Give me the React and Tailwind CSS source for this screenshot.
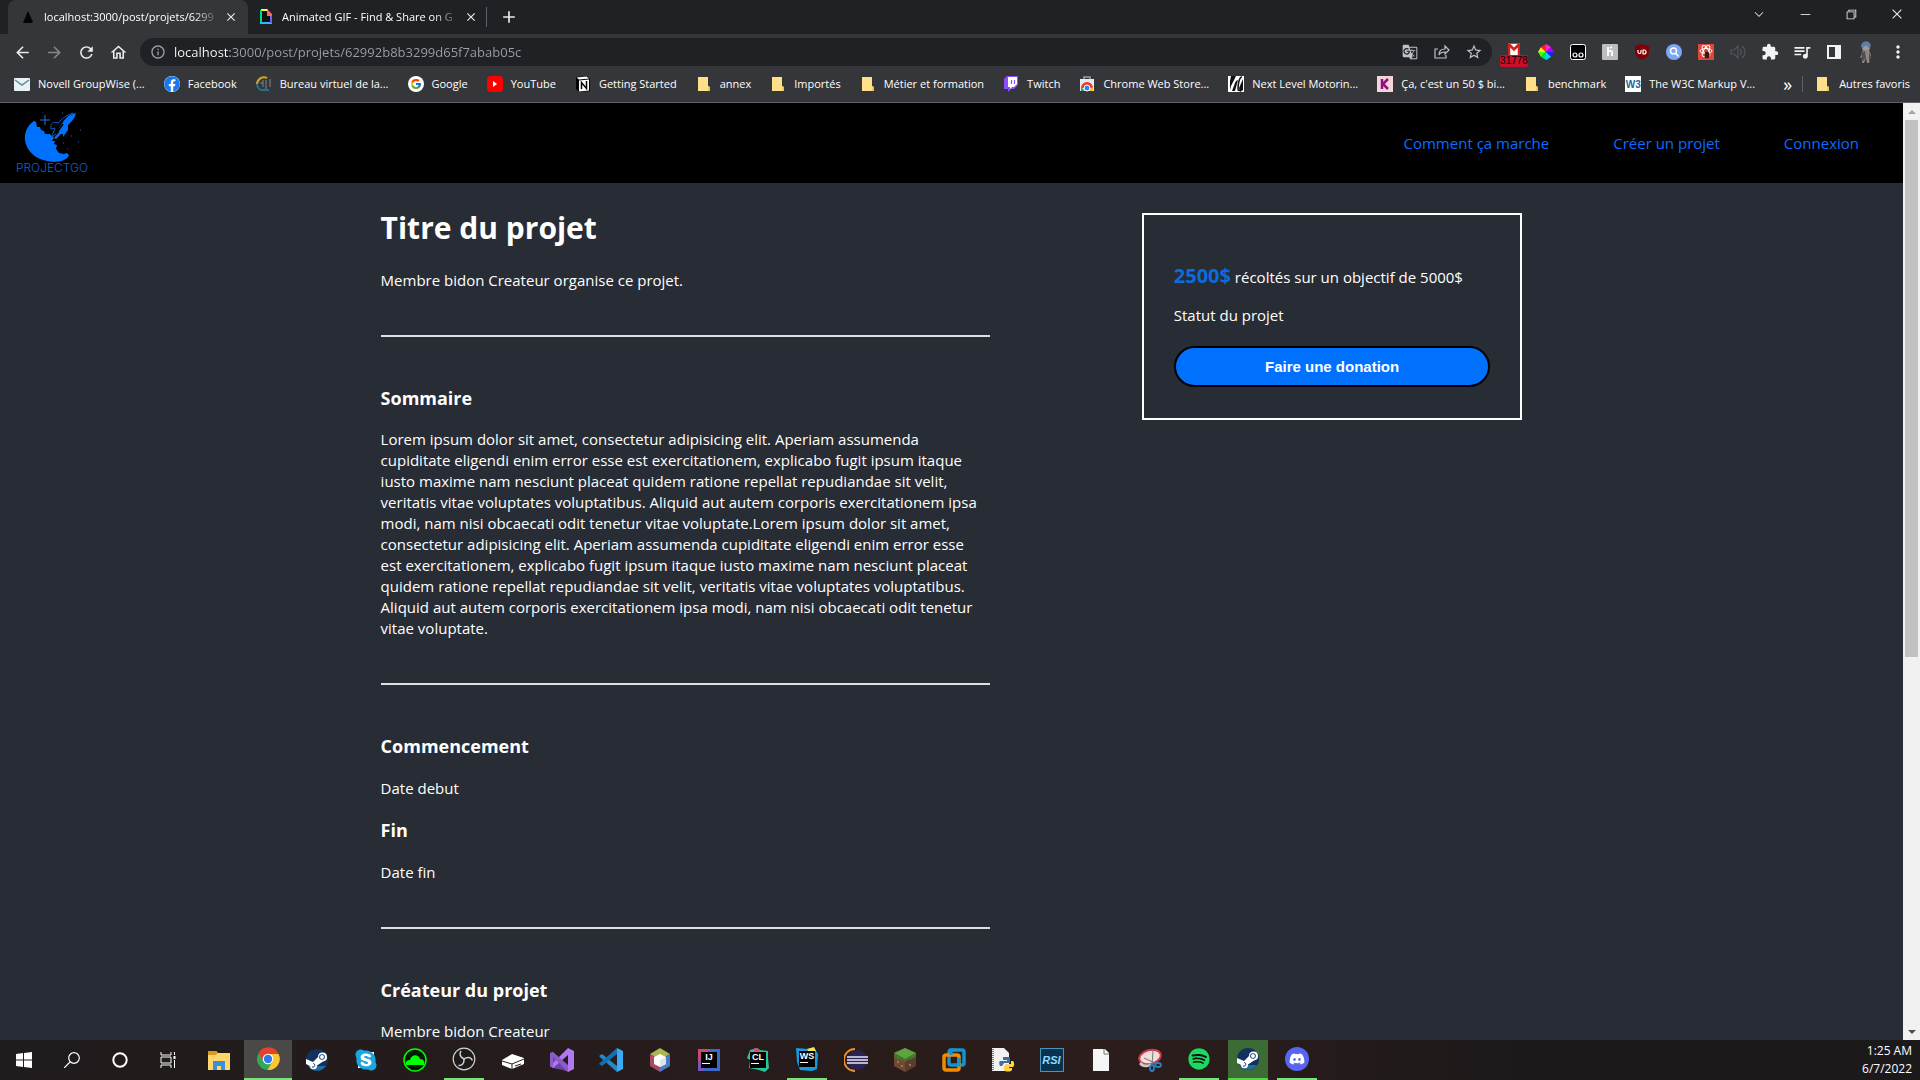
import React from "react";
import { FaFacebook, FaYoutube, FaTwitch, FaSteam, FaSkype, FaDiscord, FaSpotify } from "react-icons/fa";
import { FcGoogle } from "react-icons/fc";
import {
  MdArrowBack, MdArrowForward, MdRefresh, MdOutlineHome, MdInfoOutline, MdGTranslate,
  MdStarBorder, MdQueueMusic, MdMoreVert, MdAdd, MdClose, MdExtension,
} from "react-icons/md";
import { VscChromeClose, VscChromeMinimize, VscChromeRestore, VscChevronDown } from "react-icons/vsc";

const Svg = ({ box = 24, className = "size-6", children }) => (
  <svg viewBox={`0 0 ${box} ${box}`} className={className} fill="none" aria-hidden="true">{children}</svg>
);

/* ---------- bookmark icons ---------- */
const Folder = () => (
  <Svg box={16} className="size-4"><path d="M2 1h10v9l2 1v4H2z" fill="#ffe08a" /><path d="M12 10l2 1v4h-2z" fill="#f0c65a" /></Svg>
);
const Mail = () => (
  <Svg box={16} className="size-4"><rect y="2" width="16" height="13" rx="1" fill="#e8f1f4" /><path d="M1 4l7 5 7-5" stroke="#5d8ba0" strokeWidth="1.500" /></Svg>
);
const Bureau = () => (
  <Svg box={16} className="size-4">
    <path d="M1 8a7 7 0 0 1 10-6" stroke="#d9a520" strokeWidth="2" />
    <path d="M1 8a6 6 0 0 0 7 6h5" stroke="#2b6d8f" strokeWidth="2" />
    <path d="M7 4v7M10 4v9M14 3v8M4 7h3" stroke="#7d8790" />
  </Svg>
);
const Notion = () => (
  <Svg box={16} className="size-4"><path d="M1 1l11-1 3 3v12l-11 1-3-3z" fill="#000" /><path d="M1.500 1.500l10-1 2.500 2-10 1z" fill="#fff" /><path d="M4 4.500l10-1v11l-10 1z" fill="#fff" /><path d="M6.500 13V6.500l5 6V5" stroke="#000" strokeWidth="1.500" /></Svg>
);
const WebStore = () => (
  <Svg box={16} className="size-4">
    <path d="M5 4V1h6v3" stroke="#9aa0a6" strokeWidth="1.500" /><path d="M1 3h14v12H1z" fill="#e8eaed" />
    <path d="M2 12a6 6 0 0 1 12 0H8z" fill="#e33b2e" /><path d="M2 11l4 4H2z" fill="#2ea44f" /><path d="M14 11v4H8z" fill="#fbc02d" /><circle cx="8" cy="12" r="3" fill="#3f7ff0" stroke="#fff" />
  </Svg>
);
const NextLevel = () => (
  <Svg box={16} className="size-4"><path d="M0 0h16v16H0z" fill="#fff" /><path d="M3 0h5L3 10l-1 4V5zM8 5l2-1-3 11H4l3-8zM15 3v11l-3 2-1-4z" fill="#111" /><path d="M14 1c-3 0-4 8-4 12 0 2 2 2 3 0" stroke="#111" strokeWidth="1.500" /></Svg>
);
const KIcon = () => (
  <Svg box={16} className="size-4"><path d="M0 0h16v16H0z" fill="#f7d3dc" /><path d="M5 3v10M11 3L6 8l5 5" stroke="#8b1380" strokeWidth="2.500" /></Svg>
);
const W3 = () => (
  <span className="flex size-4 items-center justify-center bg-white font-['Liberation_Sans'] text-[10px] font-bold text-[#1f6098]">W3</span>
);

const bookmarks = [
  [Mail, "Novell GroupWise (..."],
  [() => <span className="flex size-4 rounded-full bg-white"><FaFacebook className="size-4 text-[#1877f2]" /></span>, "Facebook"],
  [Bureau, "Bureau virtuel de la..."],
  [() => <span className="flex size-4 items-center justify-center rounded-full bg-white"><FcGoogle className="size-3" /></span>, "Google"],
  [() => <span className="flex size-4 items-center justify-center rounded-sm bg-[#f00]"><Svg box={8} className="size-2"><path d="M2 1l4 3-4 3z" fill="#fff" /></Svg></span>, "YouTube"],
  [Notion, "Getting Started"],
  [Folder, "annex"],
  [Folder, "Importés"],
  [Folder, "Métier et formation"],
  [() => (
    <Svg box={16} className="size-4"><path d="M4 0h11v9l-4 4H8l-3 3v-3H1V3z" fill="#8d4cff" /><path d="M5 1h9v7l-3 3H9l-2 2v-2H5z" fill="#fff" /><path d="M8.500 4v4M11.500 4v4" stroke="#8d4cff" strokeWidth="1.200" /></Svg>
  ), "Twitch"],
  [WebStore, "Chrome Web Store..."],
  [NextLevel, "Next Level Motorin..."],
  [KIcon, "Ça, c'est un 50 $ bi..."],
  [Folder, "benchmark"],
  [W3, "The W3C Markup V..."],
];

/* ---------- browser extension icons ---------- */
const ShareIcon = () => (
  <Svg box={16} className="size-4"><path d="M4 5H1v9h11v-3M5 11c0-4 2-6 6-6V2l4 4-4 4V8c-3 0-5 1-6 3z" stroke="#bdc1c6" strokeWidth="1.200" /></Svg>
);
const Wheel = () => (
  <Svg box={16} className="size-4">
    <path d="M8 8V0l5 3z" fill="#ff2ad4" /><path d="M8 8l5-5 3 5z" fill="#b100ff" /><path d="M8 8h8l-3 5z" fill="#2020ff" /><path d="M8 8l5 5-5 3z" fill="#00d5ff" />
    <path d="M8 8v8l-5-3z" fill="#00e060" /><path d="M8 8l-5 5-3-5z" fill="#40ff00" /><path d="M8 8H0l3-5z" fill="#ffe600" /><path d="M8 8L3 3l5-3z" fill="#ff2020" />
  </Svg>
);
const Tamper = () => (
  <Svg box={16} className="size-4"><rect x=".5" y=".5" width="15" height="15" rx="2" fill="#000" stroke="#fff" /><circle cx="5" cy="11" r="2" stroke="#fff" strokeWidth="1.200" /><circle cx="11" cy="11" r="2" stroke="#fff" strokeWidth="1.200" /></Svg>
);
const Honey = () => (
  <Svg box={16} className="size-4"><rect width="16" height="16" rx="1" fill="#bdbdbd" /><path d="M6 3v9M6 8c3-2 5-1 4 1v3M8 4l2-1" stroke="#fff" strokeWidth="1.800" /></Svg>
);
const UBlock = () => (
  <Svg box={16} className="size-4"><path d="M8 0l7 2v6c0 4-3 6-7 8-4-2-7-4-7-8V2z" fill="#800008" /><path d="M4 6v2a1.500 1.500 0 0 0 3 0V6M9 6h1a2 2 0 0 1 0 4H9z" stroke="#fff" strokeWidth="1.200" /></Svg>
);
const Search = () => (
  <Svg box={16} className="size-4"><circle cx="8" cy="8" r="8" fill="#7ba7f5" /><circle cx="7.500" cy="7" r="3" stroke="#fff" strokeWidth="1.500" /><path d="M10 9.500l2.500 3" stroke="#fff" strokeWidth="1.500" /></Svg>
);
const ReactBug = () => (
  <Svg box={16} className="size-4"><path d="M0 0h16v16H0z" fill="#e0453a" /><g stroke="#fff"><ellipse cx="8" cy="7" rx="6" ry="2.500" /><ellipse cx="8" cy="7" rx="6" ry="2.500" transform="rotate(60 8 7)" /><ellipse cx="8" cy="7" rx="6" ry="2.500" transform="rotate(120 8 7)" /></g><ellipse cx="9" cy="11" rx="2.500" ry="3.500" fill="#3a1512" /></Svg>
);
const Speaker = () => (
  <Svg box={16} className="size-4"><path d="M1 6h3l4-4v12l-4-4H1zM10 5c2 2 2 4 0 6M12 2c4 3 4 9 0 12" stroke="#505357" strokeWidth="1.200" /></Svg>
);
const SidePanel = () => (
  <Svg box={16} className="size-4"><path d="M2 2h12v12H2z" stroke="#f1f3f4" strokeWidth="2" /><path d="M9 2h5v12H9z" fill="#f1f3f4" /></Svg>
);
const Avatar = () => (
  <Svg box={24} className="size-6">
    <circle cx="12" cy="7" r="4" fill="#9a9b9f" /><path d="M7 7c0-7 9-8 10-1l-2 2-3-3-3 3z" fill="#5d7fa3" /><path d="M9 10h6l2 5-2 8h-2l-1-5-2 5H8l1-6-3 1z" fill="#908782" />
    <path d="M7 13l4-2 1 7-3 3zM15 12l2 5-2 5z" fill="#554e50" />
  </Svg>
);
const GmailBadge = () => (
  <span className="flex w-7 flex-col items-center pt-1.5">
    <Svg box={16} className="h-3 w-4"><path d="M0 1h16v15H0z" fill="#fff" /><path d="M0 1v15h3V6l5 5 5-5v10h3V1h-3L8 6 3 1z" fill="#d32020" /></Svg>
    <span className="h-3 w-7 rounded-xs bg-[#c8102a] text-center font-['Liberation_Sans'] text-[10px] leading-3 text-black">31778</span>
  </span>
);
const extensions = [
  ["Gmail", GmailBadge], ["Couleurs", Wheel], ["Tampermonkey", Tamper], ["Honey", Honey], ["uBlock", UBlock], ["Recherche", Search],
  ["React", ReactBug], ["Son", Speaker], ["Extensions", () => <MdExtension className="size-[18px]" />],
  ["Musique", () => <MdQueueMusic className="size-5" />], ["Panneau", SidePanel], ["Profil", Avatar], ["Menu", () => <MdMoreVert className="size-5" />],
];

/* ---------- taskbar icons ---------- */
const Windows = () => <Svg box={16} className="size-4"><path d="M0 2l7-1v6.500H0zM8 1l8-1v7.500H8zM0 8.500h7V15l-7-1zM8 8.500h8V16l-8-1z" fill="#fff" /></Svg>;
const Loupe = () => <Svg box={16} className="size-4"><circle cx="10" cy="6" r="5.300" stroke="#fff" strokeWidth="1.200" /><path d="M6 10l-6 6" stroke="#fff" strokeWidth="1.200" /></Svg>;
const Cortana = () => <Svg box={16} className="size-4"><circle cx="8" cy="8" r="6.700" stroke="#fff" strokeWidth="2" /></Svg>;
const TaskView = () => <Svg box={16} className="size-4"><path d="M1 0v3h10V0M1 16v-3h10v3M1 5h10v6H1zM14.500 0v3M14.500 8v8" stroke="#fff" /><path d="M13.500 4h2v3h-2z" fill="#fff" /></Svg>;
const Explorer = () => (
  <Svg><path d="M1 3h8l2 2h12v17H1z" fill="#ffd66b" /><path d="M1 3h8l2 2-2 2H1z" fill="#d99b1c" /><path d="M6 13h12v9h-4v-4h-4v4H6z" fill="#3b8ede" /></Svg>
);
const Chrome = () => (
  <Svg><circle cx="12" cy="12" r="11" fill="#34a853" /><path d="M12 12L2.500 6.500A11 11 0 0 1 22.500 7z" fill="#e8402f" /><path d="M12 7h10.500A11 11 0 0 1 11.500 23l5-8.500z" fill="#fbc62e" /><path d="M2.500 6.500l5 8L12 7z" fill="#e8402f" /><circle cx="12" cy="12" r="5.300" fill="#fff" /><circle cx="12" cy="12" r="4.200" fill="#2f79ee" /></Svg>
);
const Steam = () => (
  <Svg>
    <circle cx="12" cy="12" r="11" fill="#12315f" /><path d="M3 18a11 11 0 0 0 18 0z" fill="#1b6fa5" />
    <path d="M1 11l7 3 5-5a4.500 4.500 0 1 1 5 4.500l-6 4a3.500 3.500 0 0 1-7 .5l-4-2z" fill="#fff" />
    <circle cx="17" cy="9" r="2.800" fill="#12315f" /><circle cx="17" cy="9" r="2" fill="#fff" /><path d="M7 19c3 1 4-3 1-3.500" stroke="#12315f" />
  </Svg>
);
const Skype = () => <span className="relative flex size-6 items-center justify-center"><span className="absolute size-4 bg-white" /><FaSkype className="relative size-6 text-[#1aa6e0]" /></span>;
const Cloud = () => <Svg><circle cx="12" cy="12" r="11" stroke="#0f0" strokeWidth="1.500" fill="#001800" /><path d="M3 17c-1-3 1-5 4-5 1-6 9-6 10-1 4 0 5 3 4 6z" fill="#0f0" /></Svg>;
const Obs = () => (
  <Svg><circle cx="12" cy="12" r="10.800" fill="#1c1a1b" stroke="#d0d0d0" strokeWidth="1.200" />
    <g stroke="#d0d0d0" strokeWidth="1.500"><path d="M12 12c-4-2-5-5-3-8" /><path d="M12 12c-4-2-5-5-3-8" transform="rotate(120 12 12)" /><path d="M12 12c-4-2-5-5-3-8" transform="rotate(240 12 12)" /></g></Svg>
);
const Drive = () => <Svg><path d="M1 12l10-6 12 4v6l-12 5-10-4z" fill="#fff" /><path d="M1 13l10 3 12-5M11 16v5M14 18l6-2" stroke="#252122" /></Svg>;
const VisualStudio = () => <Svg><path d="M0 5l3-1 15 20-5-2L3 20l-3-2z" fill="#6d45a8" /><path d="M0 18L18 0l6 3v18l-6 3V7L3 20z" fill="#b179f1" /><path d="M0 5l3-1 15 13v7L3 9v10l-3-1z" fill="#8a5bc9" /></Svg>;
const Code = () => <Svg><path d="M0 8l3-2 15 12v6l-16-14z" fill="#2489ca" /><path d="M0 16l3 2L18 6V0L2 14z" fill="#1070b3" /><path d="M18 0l6 3v18l-6 3z" fill="#3baaf2" /></Svg>;
const Cube = () => <Svg><path d="M12 0l10 6-10 6L2 6z" fill="#a6b84f" /><path d="M2 6l10 6v12L2 18z" fill="#ae4964" /><path d="M22 6v12l-10 6V12z" fill="#4b7bc0" /><path d="M12 6l6 3v7l-6 3-6-3V9z" fill="#fff" /><path d="M12 12l6-3v7l-6 3z" fill="#dce5ee" /></Svg>;

const Jet = ({ name, children }) => (
  <span className="relative flex size-6 items-center justify-center">
    <Svg className="absolute size-6">{children}</Svg>
    <span className="relative flex size-4 flex-col bg-black pl-px font-['Liberation_Sans'] text-[9px] leading-[11px] font-bold text-white">{name}<span className="h-px w-2 bg-white" /></span>
  </span>
);
const IJ = () => <Jet name="IJ"><path d="M1 1h22v22H1z" fill="#3b69c9" /><path d="M1 1h13L1 14z" fill="#c44b72" /><path d="M1 14l6-6v15H1z" fill="#7b55b5" /></Jet>;
const CL = () => <Jet name="CL"><path d="M4 2l7-2 3 2 8 1v7l1 10-4 4-6-2-10-2 1-8-3-2z" fill="#25c596" /><path d="M8 0l5 1 1 4H8z" fill="#d04c83" /></Jet>;
const WS = () => <Jet name="WS"><path d="M1 1l12 1 6-1 4 6-1 15-5 2-12-1-3-8z" fill="#159cde" /><path d="M12 2l7-2 2 4-6 2z" fill="#f3e84b" /></Jet>;
const Eclipse = () => <Svg><path d="M11 1a11 11 0 0 0 0 22" stroke="#e8912d" strokeWidth="1.800" /><circle cx="13.500" cy="12" r="10" fill="#2c2255" /><path d="M3 9h21M3 12h21M3 15h21" stroke="#e9e7f3" strokeWidth="1.500" /></Svg>;
const Grass = () => (
  <Svg><path d="M12 0l11 5v13l-11 6-11-6V5z" fill="#6f4a33" /><path d="M12 0l11 5-11 6L1 5z" fill="#5ea33d" /><path d="M1 5l11 6 11-6v4l-4 1v2l-4-1-3 3-4-3-3 1-4-4z" fill="#3f7a2b" /><path d="M12 14v10l11-6V9z" fill="#3f2a1f" opacity=".4" /><path d="M4 13h2v2H4zM8 17h2v2H8zM16 16h2v2h-2z" fill="#9b7357" /></Svg>
);
const VmWare = () => <Svg><rect x="7" y="2" width="15" height="15" rx="2" stroke="#1693ca" strokeWidth="3.500" /><rect x="2" y="7" width="15" height="15" rx="2" stroke="#f38b00" strokeWidth="3.500" /><path d="M9 7V2h5M17 10v7h-4" stroke="#1693ca" strokeWidth="3" /></Svg>;
const Python = () => (
  <Svg><path d="M1 0h12l5 5v18H1z" fill="#f1f1f1" /><path d="M2 1v21" stroke="#777" strokeDasharray="1 1" strokeWidth="2" /><path d="M12 9h5c2 0 2 1 2 3v3h-6l-2 3H9c-1-2-1-5 0-5h7v-1h-4z" fill="#3771a5" /><path d="M20 13h2c2 2 1 6 0 6h-5v1h4v2c-1 2-7 2-8 0v-4l2-2h5z" fill="#ffd343" /></Svg>
);
const Rsi = () => <span className="flex size-6 items-center justify-center border border-[#4b93bb] bg-[#09324e] font-['Liberation_Sans'] text-[11px] font-bold text-[#8bdcff] italic">RSI</span>;
const FileIcon = () => <Svg><path d="M4 1h12l4 4v18H4z" fill="#f5f5f5" /><path d="M15 1v5h5" stroke="#777" /></Svg>;
const Snip = () => <Svg><ellipse cx="12" cy="9" rx="11" ry="7" fill="#f0dede" stroke="#c93b43" strokeWidth="2" transform="rotate(-15 12 9)" /><path d="M3 14c4 4 8 3 10 1v3c-5 2-9 2-12-2z" fill="#c9c9c9" /><path d="M15 3l-1 14M6 10l13 6" stroke="#777" /><ellipse cx="14" cy="20" rx="2" ry="3" stroke="#2d7fc0" strokeWidth="1.800" /><ellipse cx="20" cy="17" rx="3" ry="2" stroke="#2d7fc0" strokeWidth="1.800" /></Svg>;
const Spotify = () => <span className="flex size-5.5 rounded-full bg-[#101010]"><FaSpotify className="size-5.5 text-[#1ed760]" /></span>;
const Discord = () => <span className="flex size-6 items-center justify-center rounded-full bg-[#5865f2]"><FaDiscord className="size-4 text-white" /></span>;

const systemItems = [["Démarrer", Windows], ["Rechercher", Loupe], ["Cortana", Cortana], ["Vue des tâches", TaskView]];
const apps = [
  ["Explorateur", Explorer], ["Chrome", Chrome, "active"], ["Steam", Steam], ["Skype", Skype], ["Cloud", Cloud], ["OBS", Obs, "open"], ["Disque", Drive],
  ["Visual Studio", VisualStudio], ["VS Code", Code], ["Cube", Cube], ["IntelliJ", IJ], ["CLion", CL], ["WebStorm", WS, "open"], ["Eclipse", Eclipse],
  ["Minecraft", Grass], ["VMware", VmWare], ["Python", Python], ["RSI Launcher", Rsi], ["Fichier", FileIcon], ["Capture", Snip], ["Spotify", Spotify, "open"],
  ["Steam en cours", Steam, "alert"], ["Discord", Discord, "open"],
];
const appStyles = {
  active: "bg-[#4b4848] border-b-2 border-[#76e577]",
  open: "border-b-2 border-[#76e577]",
  alert: "bg-[#3c6b36] border-b-2 border-[#4fdb3f]",
};

/* ---------- browser ---------- */
function Tab({ title, icon, active }) {
  return (
    <div className={`flex h-[34px] min-w-0 shrink-0 items-center ${active ? "w-60 rounded-t-lg bg-[#35363a] pr-2.5 pl-3" : "w-[238px] pr-2 pl-2.5"}`}>
      {icon}
      <button className="ml-2 min-w-0 flex-1 overflow-hidden mask-r-from-85% text-left text-[11px] whitespace-nowrap text-white">{title}</button>
      <button aria-label="Fermer l'onglet" className="ml-1 text-[#e8eaed]"><MdClose className="size-3.5" /></button>
    </div>
  );
}

function Browser() {
  return (
    <div className="shrink-0 border-b border-[#5f6165] bg-[#35363a] text-[#e8eaed]">
      <div className="flex h-[34px] items-center bg-[#202124] pl-2">
        <Tab active title="localhost:3000/post/projets/6299" icon={<Svg box={16} className="size-4"><path d="M8 2l5 11-2 1H3z" fill="#050505" /></Svg>} />
        <Tab title="Animated GIF - Find & Share on G" icon={
          <Svg box={16} className="size-4"><path d="M3 1h7" stroke="#fff35c" strokeWidth="2" /><path d="M3 1v13" stroke="#00d97e" strokeWidth="2" /><path d="M2 14h12" stroke="#28b9ff" strokeWidth="2" /><path d="M13 6v8" stroke="#6f60f0" strokeWidth="2" /><path d="M9 0l5 5v2H9z" fill="#ff6666" /><path d="M4 2h5v5h3v6H4z" fill="#111" /></Svg>
        } />
        <span className="h-5 w-px bg-[#5f6368]" />
        <button aria-label="Nouvel onglet" className="ml-3"><MdAdd className="size-5" /></button>
        <div className="mb-1.5 ml-auto flex">
          {[["Onglets", VscChevronDown], ["Réduire", VscChromeMinimize], ["Restaurer", VscChromeRestore], ["Fermer", VscChromeClose]].map(([label, Icon]) => (
            <button key={label} aria-label={label} className="flex w-[46px] justify-center"><Icon className="size-3.5" /></button>
          ))}
        </div>
      </div>
      <div className="flex h-9 items-center pl-1.5">
        {[["Précédent", MdArrowBack], ["Suivant", MdArrowForward], ["Actualiser", MdRefresh], ["Accueil", MdOutlineHome]].map(([label, Icon]) => (
          <button key={label} aria-label={label} className={`flex w-8 justify-center ${label === "Suivant" ? "text-[#85878a]" : ""}`}><Icon className="size-[19px]" /></button>
        ))}
        <div className="ml-1.5 flex h-7 min-w-0 flex-1 items-center rounded-full bg-[#202124] pr-0.5 pl-2.5">
          <MdInfoOutline className="size-4 text-[#9aa0a6]" />
          <input
            aria-label="Adresse"
            readOnly
            defaultValue="localhost:3000/post/projets/62992b8b3299d65f7abab05c"
            className="ml-2 h-7 min-w-0 flex-1 bg-[linear-gradient(90deg,#fff_56px,#9aa0a6_56px)] bg-clip-text text-[13px] text-transparent outline-none"
          />
          {[["Traduire", () => <MdGTranslate className="size-4" />], ["Partager", ShareIcon], ["Favori", () => <MdStarBorder className="size-[18px]" />]].map(([label, Icon]) => (
            <button key={label} aria-label={label} className="flex w-8 justify-center text-[#bdc1c6]"><Icon /></button>
          ))}
        </div>
        <div className="ml-1.5 flex pr-1.5">
          {extensions.map(([label, Icon]) => (
            <button key={label} aria-label={label} className="flex h-8 w-8 items-center justify-center text-[#f1f3f4]"><Icon /></button>
          ))}
        </div>
      </div>
      <div className="flex h-8 items-center pr-2.5 pb-1 pl-3.5 text-[11px] text-white">
        <nav aria-label="Favoris" className="flex min-w-0 flex-1 gap-[19px] overflow-hidden">
          {bookmarks.map(([Icon, label]) => (
            <a key={label} href="#" className="flex shrink-0 items-center gap-2 whitespace-nowrap"><Icon />{label}</a>
          ))}
        </nav>
        <button className="mr-2.5 text-lg leading-4">»</button>
        <span className="h-4 w-px bg-[#5f6368]" />
        <a href="#" className="ml-3 flex items-center gap-2 whitespace-nowrap"><Folder />Autres favoris</a>
      </div>
    </div>
  );
}

/* ---------- web page ---------- */
const Logo = () => (
  <a href="#" aria-label="ProjectGo" className="flex w-[72px] flex-col items-center text-[#1560c8]">
    <svg viewBox="0 0 72 50" className="h-[50px] w-[72px]" fill="none" aria-hidden="true">
      <path d="M18 9l2 1 1 5 3 0 1 3 3 1 1 3 5 0 4 4-2 3 3 0 -1 3 3 1-1 4 3 4 5 1 3-1 2 2-1 2C46 52 30 51 20 45 4 34 7 16 18 9z" fill="#0071ff" />
      <path d="M60 1c-6 1-10 4-13 9l-4 6 0 4-5 6 2 1 5-5 2 0 0 3 5-7 0-5c4-4 7-7 8-12z" fill="#0071ff" />
      <path d="M57 1c-7 2-11 6-15 10-5-2-8 1-7 6l4-1c0 3-3 5-3 9l4-3" stroke="#0f5cc0" />
      <path d="M47 12l-7 10" stroke="#000" strokeWidth="1.500" />
      <path d="M29 3v10M24 8h10" stroke="#1c72dc" />
      <path d="M46 1h1M64 18h1M62 30h1M51 37h1M55 24h1M47 31h1M26 0h1" stroke="#1560c8" />
    </svg>
    <span className="font-['Inter'] text-[12px] leading-3 font-light">PROJECTGO</span>
  </a>
);

const Rule = () => <hr className="mt-11 mb-[49px] border-t-2 border-[#dfe0e3]" />;
const Heading = ({ children }) => <h3 className="text-lg leading-[25px] font-bold">{children}</h3>;

const lorem = "Lorem ipsum dolor sit amet, consectetur adipisicing elit. Aperiam assumenda cupiditate eligendi enim error esse est exercitationem, explicabo fugit ipsum itaque iusto maxime nam nesciunt placeat quidem ratione repellat repudiandae sit velit, veritatis vitae voluptates voluptatibus. Aliquid aut autem corporis exercitationem ipsa modi, nam nisi obcaecati odit tenetur vitae voluptate.";

function Page() {
  return (
    <div className="flex min-h-0 flex-1">
      <div className="min-w-0 flex-1 overflow-hidden text-[15px] leading-[21px]">
        <header className="flex h-20 items-center justify-between bg-black pr-11 pl-4">
          <Logo />
          <nav className="flex gap-16 text-[#0b6bff]">
            <a href="#">Comment ça marche</a>
            <a href="#">Créer un projet</a>
            <a href="#">Connexion</a>
          </nav>
        </header>
        <main className="mx-auto grid w-3/5 grid-cols-[2fr_1fr] items-start text-white">
          <article className="w-4/5 pt-6">
            <h1 className="text-[30px] leading-[41px] font-bold">Titre du projet</h1>
            <p className="mt-[22px]">Membre bidon Createur organise ce projet.</p>
            <Rule />
            <Heading>Sommaire</Heading>
            <p className="mt-[18px] pr-2">{lorem + lorem}</p>
            <Rule />
            <div className="flex flex-col gap-[19px]">
              <Heading>Commencement</Heading>
              <p>Date debut</p>
              <Heading>Fin</Heading>
              <p>Date fin</p>
            </div>
            <Rule />
            <Heading>Créateur du projet</Heading>
            <p className="mt-[18px]">Membre bidon Createur</p>
          </article>
          <aside className="mt-[30px] border-2 border-white px-[30px] pt-[46px] pb-[31px]">
            <p className="leading-[30px]"><strong className="text-xl leading-[30px] text-[#0b6bdf]">2500$</strong> récoltés sur un objectif de 5000$</p>
            <p className="mt-[13px]">Statut du projet</p>
            <button className="mt-5 h-[41px] w-full rounded-full border-2 border-black bg-[#0071ff] font-['Liberation_Sans',sans-serif] font-bold text-white">Faire une donation</button>
          </aside>
        </main>
      </div>
      <div aria-hidden="true" className="flex w-[17px] shrink-0 flex-col items-center bg-[#f1f1f1]">
        <span className="flex h-[17px] items-center"><Svg box={8} className="size-2"><path d="M0 6h8L4 2z" fill="#a3a3a3" /></Svg></span>
        <span className="flex w-full min-h-0 flex-1 flex-col px-0.5"><span className="h-[59.5%] bg-[#c1c1c1]" /></span>
        <span className="flex h-[17px] items-center"><Svg box={8} className="size-2"><path d="M0 2h8L4 6z" fill="#505050" /></Svg></span>
      </div>
    </div>
  );
}

function Taskbar() {
  return (
    <footer className="flex h-10 shrink-0 items-center bg-linear-to-r from-[#201b1c] via-[#2b1d1b] via-60% to-[#1c191a] to-80% text-white">
      {systemItems.map(([label, Icon]) => (
        <button key={label} aria-label={label} className="flex h-10 w-12 items-center justify-center"><Icon /></button>
      ))}
      <div className="ml-0.5 flex">
        {apps.map(([label, Icon, state]) => (
          <div key={label} className="flex w-[49px] justify-center">
            <button aria-label={label} className={`flex h-10 items-center justify-center ${state === "active" ? "w-12" : "w-10"} ${state ? appStyles[state] : ""}`}><Icon /></button>
          </div>
        ))}
      </div>
      <div className="ml-auto pr-2 text-right text-[12px] leading-[18px]">
        <div>1:25 AM</div>
        <div>6/7/2022</div>
      </div>
    </footer>
  );
}

export default function App() {
  return (
    <div className="flex h-screen flex-col overflow-hidden bg-[#282c34] font-['Open_Sans','Noto_Sans',sans-serif]">
      <Browser />
      <Page />
      <Taskbar />
    </div>
  );
}
